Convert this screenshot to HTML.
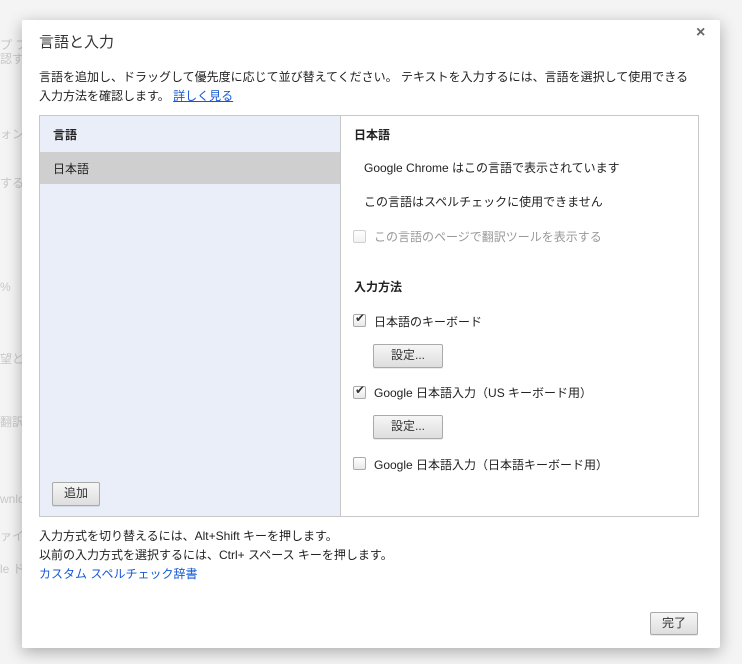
<!DOCTYPE html>
<html><head><meta charset="utf-8"><style>
*{margin:0;padding:0;box-sizing:border-box}
body{width:742px;height:664px;background:#f4f4f4;position:relative;overflow:hidden;font-family:"Liberation Sans","Noto Sans CJK JP",sans-serif;font-size:12px;color:#222}
.a{position:absolute;white-space:nowrap}
.ghost{color:#c8c8c8;font-size:12px}
#dlg{position:absolute;left:22px;top:20px;width:698px;height:628px;background:#fff;border-radius:2px;box-shadow:0 4px 16px rgba(0,0,0,.3)}
.btn{position:absolute;border:1px solid #aaa;border-radius:2px;background:linear-gradient(#f6f6f6,#dedede);text-align:center;font-size:12px;line-height:21px;color:#333;box-shadow:0 1px 0 rgba(0,0,0,.08)}
.cb{position:absolute;width:13px;height:13px;border:1px solid #aaa;border-radius:2px;background:linear-gradient(#fff,#e8e8e8)}
.cb.dis{opacity:.55}
a{color:#1558d6}
</style></head><body>
<div class="a ghost" style="left:0;top:36px">プ ブ</div>
<div class="a ghost" style="left:0;top:50px">認す</div>
<div class="a ghost" style="left:0;top:125px">ォン</div>
<div class="a ghost" style="left:0;top:174px">する</div>
<div class="a ghost" style="left:0;top:280px">%</div>
<div class="a ghost" style="left:0;top:350px">望とき</div>
<div class="a ghost" style="left:0;top:413px">翻訳</div>
<div class="a ghost" style="left:0;top:492px">wnlo</div>
<div class="a ghost" style="left:0;top:527px">ァイ</div>
<div class="a ghost" style="left:0;top:560px">le ド</div>
<div id="dlg">
<div class="a" style="left:17px;top:11px;font-size:15px;color:#333">言語と入力</div>
<div class="a" style="left:674px;top:4px;font-size:16px;color:#666;font-weight:bold">×</div>
<div class="a" style="left:17px;top:48px;line-height:19px">言語を追加し、ドラッグして優先度に応じて並び替えてください。 テキストを入力するには、言語を選択して使用できる<br>入力方法を確認します。 <a href="#">詳しく見る</a></div>
<div style="position:absolute;left:17px;top:95px;width:660px;height:402px;border:1px solid #c8c8c8">
 <div style="position:absolute;left:0;top:0;width:301px;height:400px;background:#eaeef9;border-right:1px solid #c8c8c8"></div>
 <div class="a" style="left:13px;top:10px;font-weight:bold">言語</div>
 <div style="position:absolute;left:0;top:36px;width:300px;height:32px;background:#cfcfcf"></div>
 <div class="a" style="left:13px;top:44px">日本語</div>
 <div class="btn" style="left:12px;top:366px;width:48px;height:24px">追加</div>
 <div class="a" style="left:314px;top:10px;font-weight:bold">日本語</div>
 <div class="a" style="left:324px;top:43px">Google Chrome はこの言語で表示されています</div>
 <div class="a" style="left:324px;top:77px">この言語はスペルチェックに使用できません</div>
 <div class="cb dis" style="left:313px;top:114px"></div>
 <div class="a" style="left:334px;top:112px;color:#999">この言語のページで翻訳ツールを表示する</div>
 <div class="a" style="left:314px;top:162px;font-weight:bold">入力方法</div>
 <div class="cb" style="left:313px;top:198px"><span style="position:absolute;left:1px;top:-4px;font-size:12px;color:#333">✔</span></div>
 <div class="a" style="left:334px;top:197px">日本語のキーボード</div>
 <div class="btn" style="left:333px;top:228px;width:70px;height:24px">設定...</div>
 <div class="cb" style="left:313px;top:270px"><span style="position:absolute;left:1px;top:-4px;font-size:12px;color:#333">✔</span></div>
 <div class="a" style="left:334px;top:268px">Google 日本語入力（US キーボード用）</div>
 <div class="btn" style="left:333px;top:299px;width:70px;height:24px">設定...</div>
 <div class="cb" style="left:313px;top:341px"></div>
 <div class="a" style="left:334px;top:340px">Google 日本語入力（日本語キーボード用）</div>
</div>
<div class="a" style="left:17px;top:507px;line-height:19px">入力方式を切り替えるには、Alt+Shift キーを押します。<br>以前の入力方式を選択するには、Ctrl+ スペース キーを押します。<br><span style="color:#1558d6">カスタム スペルチェック辞書</span></div>
<div class="btn" style="left:628px;top:592px;width:48px;height:23px">完了</div>
</div>
</body></html>
